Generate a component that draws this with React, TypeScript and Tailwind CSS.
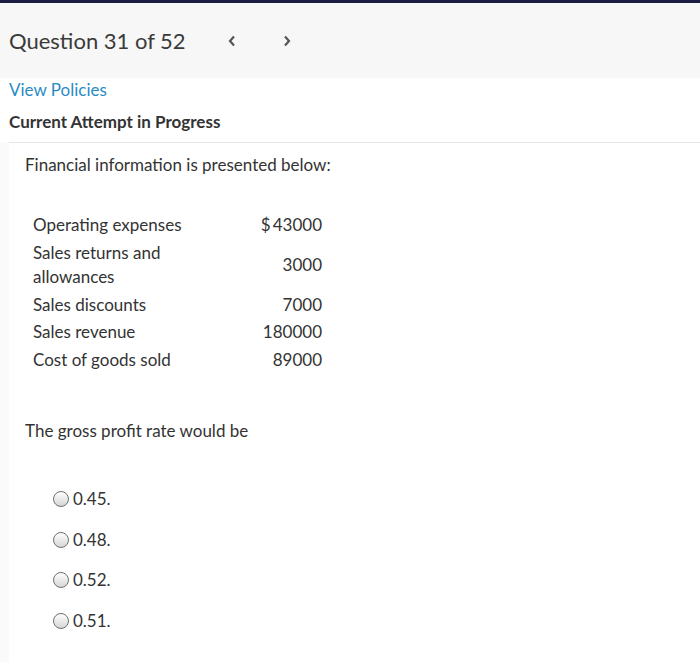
import React from "react";

const rows: { label: string; value: string; dollar?: boolean }[] = [
  { label: "Operating expenses", value: "43000", dollar: true },
  { label: "Sales returns and allowances", value: "3000" },
  { label: "Sales discounts", value: "7000" },
  { label: "Sales revenue", value: "180000" },
  { label: "Cost of goods sold", value: "89000" },
];

const options = ["0.45.", "0.48.", "0.52.", "0.51."];

function Radio() {
  return (
    <span className="inline-block w-[16px] h-[16px] rounded-full border border-[#6f6f6f] bg-gradient-to-b from-[#ffffff] to-[#d6d6d6] shrink-0" />
  );
}

export default function App() {
  return (
    <div
      className="w-[700px] h-[663px] bg-white text-[#333] overflow-hidden"
      style={{ fontFamily: "Lato, 'Open Sans', sans-serif" }}
    >
      <div className="h-[3px] bg-[#1b1e40]" />
      <div className="h-[75px] bg-[#f7f7f7] flex items-center pl-[9px]">
        <span className="text-[22px] text-[#3a3a3a] leading-none">Question 31 of 52</span>
        <span className="ml-[38px] w-[16px] flex justify-center">
          <svg width="10" height="14" viewBox="0 0 10 14">
            <path d="M7 2.5 L3 7 L7 11.5" fill="none" stroke="#555" strokeWidth="2.2" />
          </svg>
        </span>
        <span className="ml-[39px] w-[16px] flex justify-center">
          <svg width="10" height="14" viewBox="0 0 10 14">
            <path d="M3 2.5 L7 7 L3 11.5" fill="none" stroke="#555" strokeWidth="2.2" />
          </svg>
        </span>
      </div>
      <div className="pl-[9px] pt-[1px]">
        <div className="text-[17px] leading-[22px] text-[#2a8cc4] h-[22px]">View Policies</div>
        <div className="text-[17px] leading-[22px] font-bold text-[#333] mt-[10px]">
          Current Attempt in Progress
        </div>
      </div>
      <div className="flex mt-[9px]">
        <div className="w-[9px] bg-[#fafafa]" />
        <div className="flex-1 border-t border-[#e6e6e6] pl-[16px] pt-[10px] h-[520px]">
          <div className="text-[17px] leading-[24px]">Financial information is presented below:</div>
          <table className="mt-[33px] ml-[8px] w-[289px] table-fixed text-[17px] leading-[24.5px] border-separate border-spacing-y-[3px]">
            <colgroup>
              <col className="w-[165px]" />
              <col className="w-[124px]" />
            </colgroup>
            <tbody>
              {rows.map((r) => (
                <tr key={r.label}>
                  <td className="align-middle pr-[10px]">{r.label}</td>
                  <td className="text-right align-middle">
                    {r.dollar ? "$\u2009" : ""}
                    {r.value}
                  </td>
                </tr>
              ))}
            </tbody>
          </table>
          <div className="text-[17px] leading-[24px] mt-[44px]">The gross profit rate would be</div>
          <div className="mt-[44px] pl-[28px] flex flex-col gap-[16.5px]">
            {options.map((o) => (
              <label key={o} className="flex items-center gap-[4px] text-[17px] leading-[24px] h-[24px]">
                <Radio />
                <span>{o}</span>
              </label>
            ))}
          </div>
        </div>
      </div>
    </div>
  );
}
